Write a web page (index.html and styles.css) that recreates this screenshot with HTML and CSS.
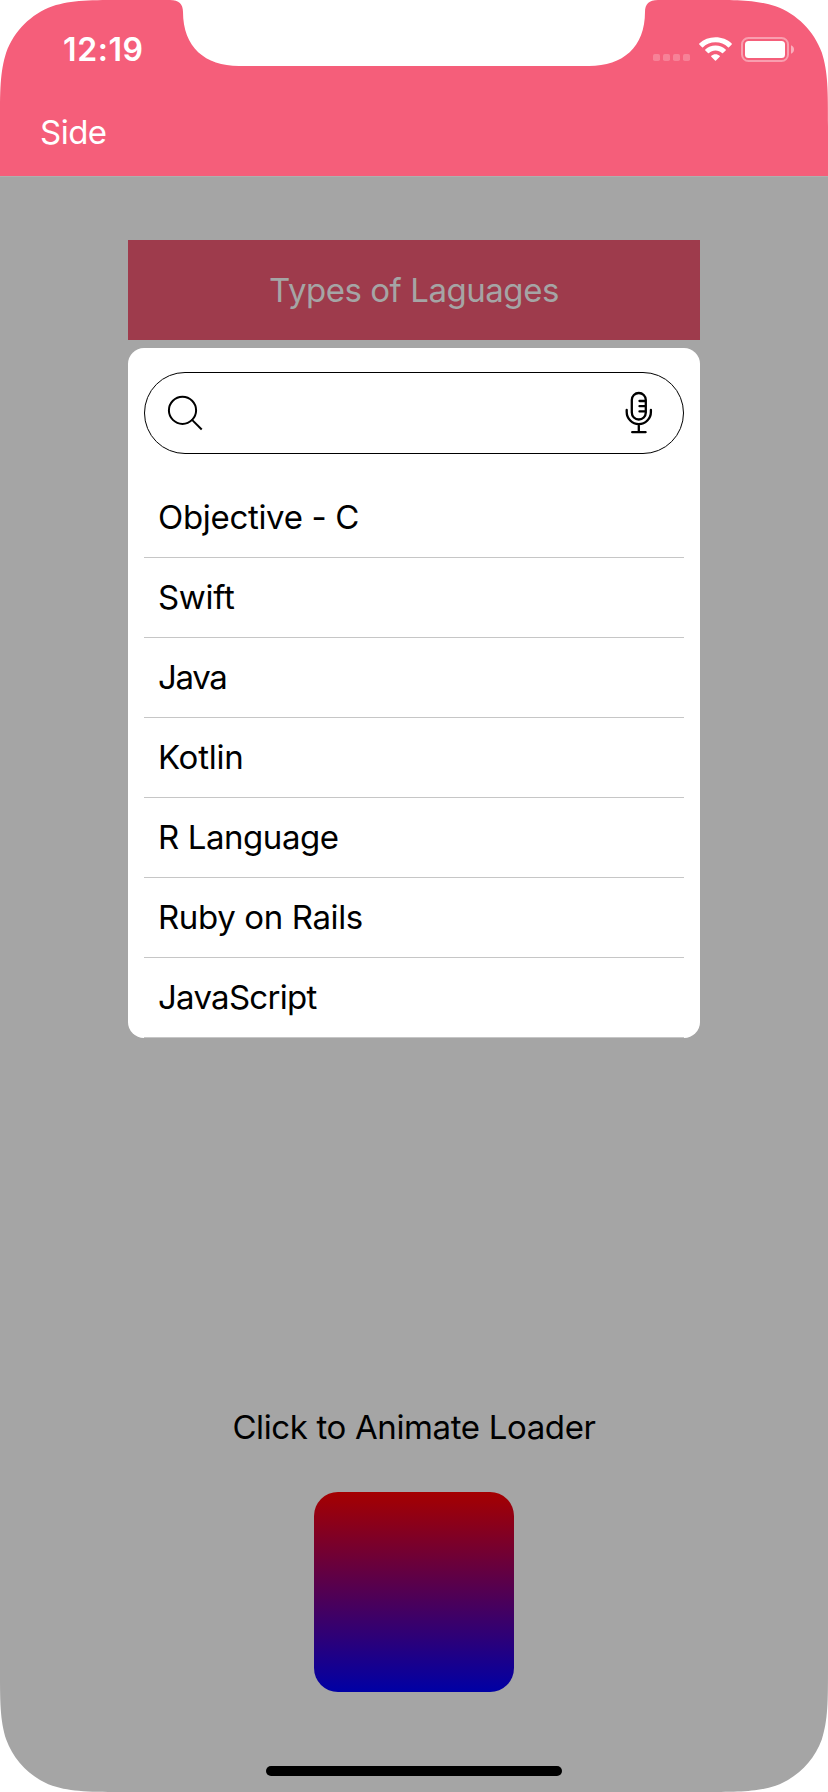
FILE: index.html
```html
<!DOCTYPE html>
<html lang="en">
<head>
<meta charset="utf-8">
<title>Types of Laguages</title>
<link rel="stylesheet" href="styles.css">
</head>
<body>
<div class="screen">
  <header class="header">
    <div class="status">
      <span class="time">12:19</span>
      <svg class="status-icons" width="142" height="28" viewBox="653 36 142 28">
        <g fill="#fff" fill-opacity=".22">
          <rect x="653" y="54" width="7" height="7" rx="1.8"/><rect x="663" y="54" width="7" height="7" rx="1.8"/>
          <rect x="673" y="54" width="7" height="7" rx="1.8"/><rect x="683" y="54" width="7" height="7" rx="1.8"/>
        </g>
        <g fill="#fff">
          <path d="M715.5 42.2C720.3 42.2 724.7 44 728 47.2Q728.5 47.7 729 47.2L731.7 44.5Q732.2 44 731.7 43.5C727.4 39.5 721.7 37.3 715.5 37.3C709.3 37.3 703.6 39.5 699.3 43.5Q698.8 44 699.3 44.500L702 47.200Q702.500 47.700 703 47.200C706.300 44 710.700 42.200 715.500 42.200Z"/>
          <path d="M715.500 50.600C718 50.600 720.300 51.500 722 53.100Q722.500 53.600 723 53.100L725.700 50.400Q726.200 49.900 725.700 49.400C722.900 46.900 719.400 45.400 715.500 45.400C711.600 45.400 708.100 46.900 705.300 49.400Q704.800 49.900 705.300 50.400L708 53.100Q708.500 53.600 709 53.100C710.700 51.500 713 50.600 715.500 50.600Z"/>
          <path d="M715.500 54.200C717.200 54.200 718.600 54.800 719.700 55.700Q720.200 56.200 719.700 56.700L716 60.400Q715.500 60.900 715 60.400L711.300 56.700Q710.800 56.200 711.300 55.700C712.400 54.800 713.800 54.200 715.500 54.200Z"/>
        </g>
        <rect x="742" y="38" width="46" height="23" rx="6.500" fill="none" stroke="#fff" stroke-opacity=".4" stroke-width="2"/>
        <rect x="745" y="41" width="40" height="17" rx="3.500" fill="#fff"/>
        <path d="M791 45.300Q794 46.500 794 49.500T791 53.700Z" fill="#fff" fill-opacity=".5"/>
      </svg>
    </div>
    <div class="nav">Side</div>
  </header>
  <main class="content">
    <div class="title">Types of Laguages</div>
    <section class="dropdown">
      <div class="search">
        <svg width="36" height="36" viewBox="167 395 36 36" fill="none" stroke="#000" stroke-width="2">
          <circle cx="182.500" cy="410.300" r="13.600"/><path d="M192.300 420.100L201 428.800" stroke-linecap="square"/>
        </svg>
        <svg width="28" height="44" viewBox="625 391 28 44" fill="none" stroke="#000" stroke-width="2.300" stroke-linecap="round">
          <rect x="631.800" y="393" width="14" height="26.500" rx="7"/>
          <path d="M626.700 410V412A12.100 12.100 0 0 0 650.900 412V410M638.800 424.200V432.200M632.200 432.200H645.600M639.500 401H645M639.500 406.200H645M639.500 411.400H645"/>
        </svg>
      </div>
      <ul class="list">
        <li class="row objective">Objective - C</li>
        <li class="row swift">Swift</li>
        <li class="row java">Java</li>
        <li class="row kotlin">Kotlin</li>
        <li class="row rlang">R Language</li>
        <li class="row ruby">Ruby on Rails</li>
        <li class="row script">JavaScript</li>
      </ul>
    </section>
    <div class="hint">Click to Animate Loader</div>
    <div class="loader"></div>
    <div class="home"></div>
  </main>
  <svg class="bezel" width="828" height="1792" viewBox="0 0 828 1792" fill="#fff">
    <defs>
      <path id="corner" d="M0 0H127C90 0 72 0 52.400 6.200C31 14 14 31 6.200 52.400C0 72 0 90 0 127Z"/>
    </defs>
    <use href="#corner"/>
    <use href="#corner" transform="translate(828 0) scale(-1 1)"/>
    <use href="#corner" transform="translate(0 1792) scale(1 -1)"/>
    <use href="#corner" transform="translate(828 1792) scale(-1 -1)"/>
    <path d="M170 0C179 0 183 4 183 12C183 47 205 66 239 66H589C623 66 645 47 645 12C645 4 649 0 658 0Z"/>
  </svg>
</div>
</body>
</html>
```
FILE: styles.css
```css
* { box-sizing: border-box; }
body { margin: 0; background: #fff; font-family: Inter, "Liberation Sans", sans-serif; font-size: 33px; line-height: 40px; }
svg { display: block; flex: none; }
.screen { position: relative; width: 828px; height: 1792px; overflow: hidden; display: flex; flex-direction: column; background: #a5a5a5; }
.bezel { position: absolute; inset: 0; pointer-events: none; }
.header { height: 177px; background: #f55e7a; border-bottom: 1px solid #afafaf; color: #fff; }
.status { height: 88px; padding: 30px 33px 0 63px; display: flex; justify-content: space-between; align-items: flex-start; }
.status-icons { margin-top: 6px; }
.time { font-size: 32px; font-weight: 600; letter-spacing: 0.6px; line-height: 40px; }
.nav { height: 88px; padding: 24px 40px; letter-spacing: -0.5px; }
.content { flex: 1; display: flex; flex-direction: column; align-items: center; padding-top: 63px; }
.title { width: 572px; height: 100px; background: #9e3b4c; color: #a5a5a5; line-height: 100px; text-align: center; letter-spacing: -0.46px; }
.dropdown { width: 572px; height: 690px; margin-top: 8px; padding: 24px 16px 0; background: #fff; border-radius: 16px; overflow: hidden; }
.search { height: 82px; border: 1px solid #000; border-radius: 41px; display: flex; align-items: center; justify-content: space-between; padding: 0 30px 0 22px; }
.list { list-style: none; margin: 24px 0 0; padding: 0; }
.row { height: 80px; padding: 0 0 0 14px; line-height: 78px; border-bottom: 1px solid #c6c6c6; }
.objective, .swift { letter-spacing: -0.32px; }
.java { letter-spacing: -1.3px; }
.kotlin { letter-spacing: -0.25px; }
.rlang { letter-spacing: -0.43px; }
.ruby { letter-spacing: -0.37px; }
.script { letter-spacing: -0.72px; }
.hint { margin-top: 369px; line-height: 40px; letter-spacing: -0.37px; }
.loader { width: 200px; height: 200px; margin-top: 45px; border-radius: 24px; background: linear-gradient(#a50000, #0000a5); }
.home { width: 296px; height: 10px; margin-top: 74px; border-radius: 5px; background: #000; }
```
